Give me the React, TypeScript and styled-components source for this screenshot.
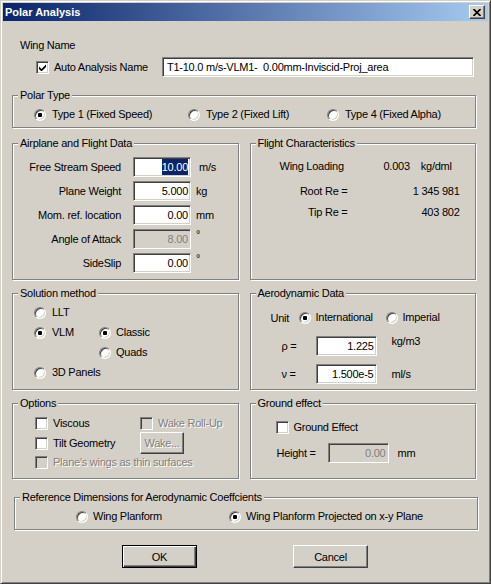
import React from 'react';
import styled, { createGlobalStyle } from 'styled-components';

const GlobalStyle = createGlobalStyle`
  html, body {
    margin: 0;
    padding: 0;
  }
  body {
    font-family: "Liberation Sans", Arial, sans-serif;
    font-size: 11px;
    letter-spacing: -0.25px;
    color: #000;
  }
`;

const Window = styled.div`
  width: 491px;
  height: 584px;
  box-sizing: border-box;
  background: #d4d0c8;
  border: 1px solid;
  border-color: #d4d0c8 #404040 #404040 #d4d0c8;
  box-shadow: inset 1px 1px 0 #fff, inset -1px -1px 0 #808080;
  padding: 2px;
  display: flex;
  flex-direction: column;
`;

const TitleBar = styled.div`
  height: 18px;
  flex: none;
  display: flex;
  align-items: center;
  padding: 0 3px 0 2px;
  background: linear-gradient(to right, #0a246a, #a6caf0);
  color: #fff;
  font-weight: bold;
  letter-spacing: 0;
`;

const CloseBox = styled.div`
  margin-left: auto;
  width: 16px;
  height: 14px;
  box-sizing: border-box;
  background: #d4d0c8;
  border: 1px solid;
  border-color: #fff #404040 #404040 #fff;
  box-shadow: inset -1px -1px 0 #808080;
  display: flex;
  align-items: center;
  justify-content: center;
`;

const Body = styled.div`
  flex: 1;
  display: flex;
  flex-direction: column;
  padding: 18px 12px 0 9px;
`;

const Caption = styled.div`
  height: 13px;
  line-height: 13px;
  padding-left: 8px;
`;

const NameRow = styled.div`
  display: flex;
  align-items: center;
  margin-top: 5px;
  padding-left: 24px;
`;

const Group = styled.div<{ $h: number; $top?: number; $pad?: string }>`
  position: relative;
  box-sizing: border-box;
  height: ${p => p.$h}px;
  margin-top: ${p => p.$top ?? 0}px;
  padding: ${p => p.$pad ?? '0'};
  border: 1px solid #808080;
  box-shadow: inset 1px 1px 0 #fff, 1px 1px 0 #fff;
`;

const Legend = styled.div`
  position: absolute;
  top: -7px;
  left: 5px;
  padding: 0 2px;
  line-height: 13px;
  background: #d4d0c8;
  white-space: nowrap;
`;

const Panels = styled.div`
  display: grid;
  grid-template-columns: 1fr 1fr;
  grid-template-rows: 137px 97px 76px;
  column-gap: 11px;
  row-gap: 13px;
  margin-top: 15px;
`;

const Choices = styled.div<{ $cols: string }>`
  display: grid;
  grid-template-columns: ${p => p.$cols};
  align-items: center;
`;

const Option = styled.label<{ $gap?: number; $disabled?: boolean }>`
  display: flex;
  align-items: center;
  gap: ${p => p.$gap ?? 6}px;
  height: 13px;
  line-height: 13px;
  white-space: nowrap;
  color: ${p => (p.$disabled ? '#808080' : '#000')};
  text-shadow: ${p => (p.$disabled ? '1px 1px 0 #fff' : 'none')};
`;

const RadioDot = styled.span<{ $on?: boolean }>`
  position: relative;
  flex: none;
  width: 12px;
  height: 12px;
  box-sizing: border-box;
  border-radius: 50%;
  border: 1px solid;
  border-color: #808080 #fff #fff #808080;
  box-shadow: inset 1px 1px 0 #404040, inset -1px -1px 0 #d4d0c8;
  background: #fff;

  &::after {
    content: '';
    display: ${p => (p.$on ? 'block' : 'none')};
    position: absolute;
    left: 3px;
    top: 3px;
    width: 4px;
    height: 4px;
    border-radius: 1px;
    background: #000;
  }
`;

const CheckBox = styled.span<{ $disabled?: boolean }>`
  flex: none;
  width: 13px;
  height: 13px;
  box-sizing: border-box;
  border: 1px solid;
  border-color: #808080 #fff #fff #808080;
  box-shadow: inset 1px 1px 0 #404040, inset -1px -1px 0 #d4d0c8;
  background: ${p => (p.$disabled ? '#d4d0c8' : '#fff')};
  display: flex;
  align-items: center;
  justify-content: center;
`;

const Field = styled.div<{ $w: number; $h?: number; $disabled?: boolean; $left?: boolean }>`
  flex: none;
  box-sizing: border-box;
  width: ${p => p.$w}px;
  height: ${p => p.$h ?? 20}px;
  border: 1px solid;
  border-color: #808080 #fff #fff #808080;
  box-shadow: inset 1px 1px 0 #404040, inset -1px -1px 0 #d4d0c8;
  background: ${p => (p.$disabled ? '#d4d0c8' : '#fff')};
  color: ${p => (p.$disabled ? '#808080' : '#000')};
  padding: 0 2px 0 4px;
  display: flex;
  align-items: center;
  justify-content: ${p => (p.$left ? 'flex-start' : 'flex-end')};
  white-space: pre;
  overflow: hidden;
`;

const Selected = styled.span`
  background: #0a246a;
  color: #fff;
  line-height: 16px;
`;

const DataRows = styled.div`
  display: flex;
  flex-direction: column;
  gap: 4px;
  padding-top: 13px;
`;

const DataRow = styled.div`
  display: flex;
  align-items: center;
  height: 20px;
`;

const RowLabel = styled.div<{ $w: number; $right?: boolean; $indent?: number }>`
  flex: none;
  box-sizing: border-box;
  width: ${p => p.$w}px;
  padding-left: ${p => p.$indent ?? 0}px;
  text-align: ${p => (p.$right ? 'right' : 'left')};
  white-space: nowrap;
`;

const Unit = styled.div<{ $gap: number; $raised?: boolean }>`
  margin-left: ${p => p.$gap}px;
  align-self: ${p => (p.$raised ? 'flex-start' : 'center')};
  line-height: ${p => (p.$raised ? '10px' : '13px')};
  white-space: nowrap;
`;

const InfoRow = styled.div<{ $top: number }>`
  display: flex;
  height: 13px;
  line-height: 13px;
  margin-top: ${p => p.$top}px;
`;

const InfoValue = styled.div<{ $w?: number; $gap?: number }>`
  width: ${p => (p.$w ? `${p.$w}px` : 'auto')};
  margin-left: ${p => p.$gap ?? 0}px;
  text-align: right;
  white-space: nowrap;
`;

const MethodGrid = styled.div`
  display: grid;
  grid-template-columns: 65px auto;
  grid-template-rows: repeat(4, 13px);
  row-gap: 7px;
  padding: 12px 0 0 21px;
`;

const OptionGrid = styled.div`
  display: grid;
  grid-template-columns: 105px auto;
  grid-template-rows: 13px 22px 13px;
  row-gap: 2px;
  align-items: center;
  padding: 13px 0 0 22px;
`;

const Button = styled.div<{ $w: number; $h: number; $primary?: boolean; $disabled?: boolean }>`
  box-sizing: border-box;
  width: ${p => p.$w}px;
  height: ${p => p.$h}px;
  display: flex;
  align-items: center;
  justify-content: center;
  background: #d4d0c8;
  border: 1px solid;
  border-color: ${p => (p.$primary ? '#000' : '#fff #404040 #404040 #fff')};
  box-shadow: ${p =>
    p.$primary
      ? 'inset 1px 1px 0 #fff, inset -1px -1px 0 #404040, inset -2px -2px 0 #808080'
      : 'inset -1px -1px 0 #808080, inset 1px 1px 0 #d4d0c8'};
  color: ${p => (p.$disabled ? '#808080' : '#000')};
  text-shadow: ${p => (p.$disabled ? '1px 1px 0 #fff' : 'none')};
`;

const ButtonRow = styled.div`
  display: flex;
  justify-content: center;
  gap: 96px;
  margin-top: 15px;
  padding-left: 2px;
`;

function Radio({ on, children, gap }: { on?: boolean; children: React.ReactNode; gap?: number }) {
  return (
    <Option $gap={gap}>
      <RadioDot $on={on} />
      {children}
    </Option>
  );
}

function Tick() {
  return (
    <svg width="7" height="7" viewBox="0 0 7 7">
      <polygon points="0,2.5 2.5,5 7,0.5 7,3 2.5,7.5 0,5" fill="#000" />
    </svg>
  );
}

function Check({ on, disabled, children }: { on?: boolean; disabled?: boolean; children: React.ReactNode }) {
  return (
    <Option $gap={5} $disabled={disabled}>
      <CheckBox $disabled={disabled}>{on && <Tick />}</CheckBox>
      {children}
    </Option>
  );
}

const flightRows = [
  { label: 'Free Stream Speed', value: '10.00', unit: 'm/s', selected: true },
  { label: 'Plane Weight', value: '5.000', unit: 'kg' },
  { label: 'Mom. ref. location', value: '0.00', unit: 'mm' },
  { label: 'Angle of Attack', value: '8.00', unit: '°', disabled: true },
  { label: 'SideSlip', value: '0.00', unit: '°' },
];

export default function App(): React.ReactElement {
  return (
    <>
      <GlobalStyle />
      <Window>
        <TitleBar>
          Polar Analysis
          <CloseBox>
            <svg width="8" height="7" viewBox="0 0 8 7">
              <path d="M0.5 0 L7.5 7 M7.5 0 L0.5 7" stroke="#000" strokeWidth="1.6" />
            </svg>
          </CloseBox>
        </TitleBar>

        <Body>
          <Caption>Wing Name</Caption>
          <NameRow>
            <div style={{ width: 126 }}>
              <Check on>Auto Analysis Name</Check>
            </div>
            <Field $w={312} $left>T1-10.0 m/s-VLM1-  0.00mm-Inviscid-Proj_area</Field>
          </NameRow>

          <Group $h={33} $top={18} $pad="12px 0 0 21px">
            <Legend>Polar Type</Legend>
            <Choices $cols="154px 139px auto">
              <Radio on>Type 1 (Fixed Speed)</Radio>
              <Radio>Type 2 (Fixed Lift)</Radio>
              <Radio>Type 4 (Fixed Alpha)</Radio>
            </Choices>
          </Group>

          <Panels>
            <Group $h={137}>
              <Legend>Airplane and Flight Data</Legend>
              <DataRows>
                {flightRows.map(r => (
                  <DataRow key={r.label}>
                    <RowLabel $w={108} $right>{r.label}</RowLabel>
                    <Field $w={58} $disabled={r.disabled} style={{ marginLeft: 12 }}>
                      {r.selected ? <Selected>{r.value}</Selected> : r.value}
                    </Field>
                    <Unit $gap={r.unit === 'm/s' ? 8 : 5} $raised={r.unit === '°'}>
                      {r.unit}
                    </Unit>
                  </DataRow>
                ))}
              </DataRows>
            </Group>

            <Group $h={137} $pad="16px 0 0 0">
              <Legend>Flight Characteristics</Legend>
              <InfoRow $top={0}>
                <RowLabel $w={97} $indent={29}>Wing Loading</RowLabel>
                <InfoValue $gap={36}>0.003</InfoValue>
                <InfoValue $gap={11}>kg/dml</InfoValue>
              </InfoRow>
              <InfoRow $top={12}>
                <RowLabel $w={97} $right>Root Re =</RowLabel>
                <InfoValue $w={112}>1 345 981</InfoValue>
              </InfoRow>
              <InfoRow $top={8}>
                <RowLabel $w={97} $right>Tip Re =</RowLabel>
                <InfoValue $w={112}>403 802</InfoValue>
              </InfoRow>
            </Group>

            <Group $h={97}>
              <Legend>Solution method</Legend>
              <MethodGrid>
                <Radio>LLT</Radio>
                <span />
                <Radio on>VLM</Radio>
                <Radio on gap={5}>Classic</Radio>
                <span />
                <Radio gap={5}>Quads</Radio>
                <Radio>3D Panels</Radio>
              </MethodGrid>
            </Group>

            <Group $h={97} $pad="17px 0 0 20px">
              <Legend>Aerodynamic Data</Legend>
              <DataRow style={{ height: 13 }}>
                <RowLabel $w={28}>Unit</RowLabel>
                <Choices $cols="87px auto">
                  <Radio on gap={5}>International</Radio>
                  <Radio gap={5}>Imperial</Radio>
                </Choices>
              </DataRow>
              <DataRow style={{ marginTop: 12 }}>
                <RowLabel $w={45} $indent={11}>ρ =</RowLabel>
                <Field $w={61}>1.225</Field>
                <Unit $gap={15} $raised>kg/m3</Unit>
              </DataRow>
              <DataRow style={{ marginTop: 8 }}>
                <RowLabel $w={45} $indent={11}>ν =</RowLabel>
                <Field $w={61}>1.500e-5</Field>
                <Unit $gap={15}>ml/s</Unit>
              </DataRow>
            </Group>

            <Group $h={76}>
              <Legend>Options</Legend>
              <OptionGrid>
                <Check>Viscous</Check>
                <Check disabled>Wake Roll-Up</Check>
                <Check>Tilt Geometry</Check>
                <Button $w={44} $h={22} $disabled>Wake...</Button>
                <div style={{ gridColumn: '1 / span 2' }}>
                  <Check disabled>Plane's wings as thin surfaces</Check>
                </div>
              </OptionGrid>
            </Group>

            <Group $h={76} $pad="17px 0 0 25px">
              <Legend>Ground effect</Legend>
              <Check>Ground Effect</Check>
              <DataRow style={{ marginTop: 9, marginLeft: 1 }}>
                <RowLabel $w={51}>Height =</RowLabel>
                <Field $w={61} $disabled>0.00</Field>
                <Unit $gap={9}>mm</Unit>
              </DataRow>
            </Group>
          </Panels>

          <Group $h={33} $top={18} $pad="12px 0 0 61px" style={{ marginLeft: 2, marginRight: -2 }}>
            <Legend>Reference Dimensions for Aerodynamic Coeffcients</Legend>
            <Choices $cols="153px auto">
              <Radio gap={5}>Wing Planform</Radio>
              <Radio on gap={5}>Wing Planform Projected on x-y Plane</Radio>
            </Choices>
          </Group>

          <ButtonRow>
            <Button $w={75} $h={23} $primary>OK</Button>
            <Button $w={75} $h={23}>Cancel</Button>
          </ButtonRow>
        </Body>
      </Window>
    </>
  );
}
